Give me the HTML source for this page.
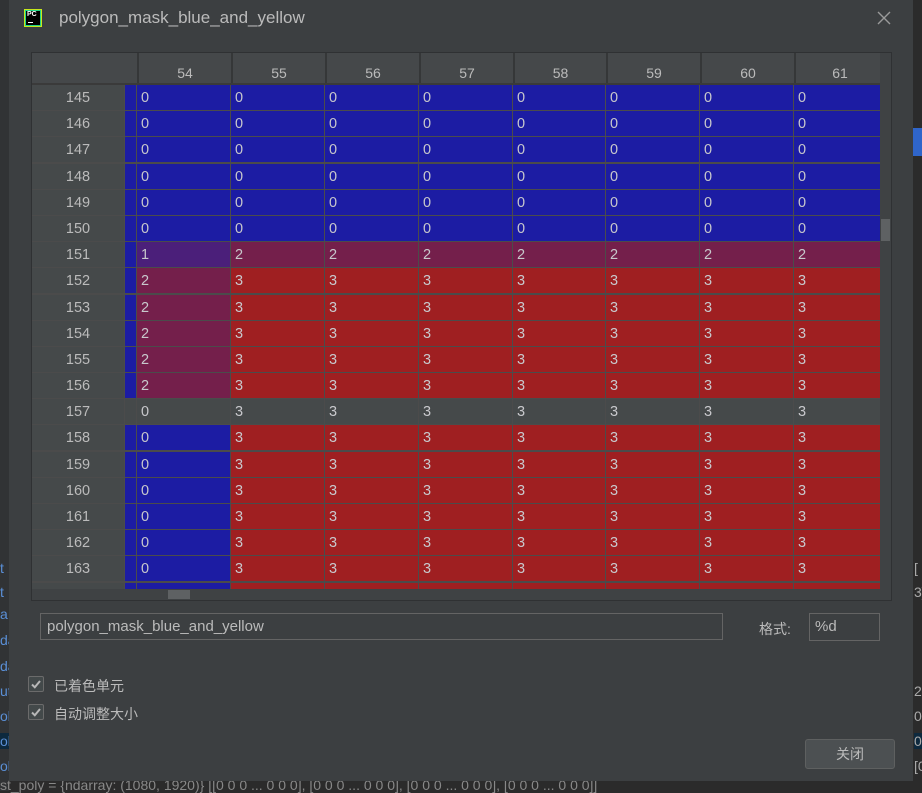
<!DOCTYPE html>
<html><head><meta charset="utf-8"><style>
body{margin:0;width:922px;height:791px;background:#2b2b2b;position:relative;overflow:hidden;font-family:"Liberation Sans","Noto Sans CJK SC",sans-serif;}
.dlg{position:absolute;left:9px;top:0;width:904px;height:781px;background:#3c3f41;}
.title{position:absolute;left:50px;top:8px;font-size:17px;color:#bbbbbb;}
.icon{position:absolute;left:15px;top:9px;width:16px;height:16px;background:#000;border:1px solid #c7e81b;box-shadow:0 0 0 1px #21d789 inset;}
.icon span{position:absolute;left:2px;top:1px;font-size:7px;font-weight:bold;color:#fff;}
.icon i{position:absolute;left:3px;bottom:3px;width:5px;height:1px;background:#fff;}
.close{position:absolute;left:867px;top:10px;width:16px;height:16px;}
.tbl{position:absolute;left:31px;top:52px;width:861px;height:549px;background:#3c3f41;border:1px solid #2f3133;box-sizing:border-box;overflow:hidden;}
.hdr{position:absolute;left:0;top:0;width:848px;height:30px;background:#45484a;border-bottom:2px solid #3a3a3a;}
.hdr div{position:absolute;top:0;height:30px;line-height:40px;text-align:center;font-size:14px;color:#bbbbbb;border-left:2px solid #353738;box-sizing:border-box;}
.grid{position:absolute;left:0;top:32px;display:grid;grid-template-columns:92px 11px 93px 93px 93px 93px 92px 93px 93px 86px;column-gap:1px;row-gap:1.2px;grid-auto-rows:25px;background:#4b4b4b;width:856px;}
.grid div{font-size:14.5px;color:#c8c8cc;line-height:27px;padding-left:4px;box-sizing:border-box;overflow:hidden;white-space:nowrap;}
.grid .i{background:#45494a;text-align:center;padding-left:0;color:#bbbbbb;}
.b{background:#1c1ca3;}.r{background:#9f1f21;}.p{background:#741f4b;}.v{background:#4b1f7a;}.g{background:#45494a;}
.vs{position:absolute;left:848px;top:0;width:12px;height:549px;background:#3f4244;}
.vs i{position:absolute;left:1px;top:166px;width:9px;height:22px;background:#5e6163;}
.hs{position:absolute;left:0;top:536px;width:848px;height:12px;background:#3f4244;}
.hs i{position:absolute;left:136px;top:1px;width:22px;height:9px;background:#5e6163;}
.inp{position:absolute;left:40px;top:613px;width:683px;height:27px;border:1px solid #646464;box-sizing:border-box;font-size:15px;color:#bbbbbb;line-height:26px;padding-left:6px;}
.lbl{position:absolute;left:759px;top:619px;font-size:14px;color:#bbbbbb;}
.fmt{position:absolute;left:809px;top:613px;width:71px;height:28px;border:1px solid #646464;box-sizing:border-box;font-size:15px;color:#bbbbbb;line-height:26px;padding-left:5px;}
.cb{position:absolute;left:28px;width:16px;height:16px;border:1px solid #6b6b6b;border-radius:2px;background:#43494a;box-sizing:border-box;}
.cbl{position:absolute;left:54px;font-size:14px;color:#bbbbbb;}
.btn{position:absolute;left:805px;top:739px;width:90px;height:30px;background:#4c5052;border:1px solid #5e6060;border-radius:3px;box-sizing:border-box;text-align:center;line-height:28px;font-size:14px;color:#bbbbbb;}
.bg{position:absolute;color:#5a8fd6;font-size:14px;}
</style></head><body>
<div style="position:absolute;left:0;top:0;width:9px;height:791px;background:#313335"></div>
<div style="position:absolute;left:913px;top:128px;width:9px;height:28px;background:#2f65ca"></div>
<div class="bg" style="left:0;top:560px">t</div><div class="bg" style="left:0;top:584px">t</div>
<div class="bg" style="left:0;top:606px">a</div><div class="bg" style="left:0;top:632px">da</div>
<div class="bg" style="left:0;top:658px">da</div><div class="bg" style="left:0;top:683px">ut</div>
<div class="bg" style="left:0;top:708px">ol</div><div class="bg" style="left:0;top:733px;background:#0d293e">ol</div>
<div class="bg" style="left:0;top:758px">ol</div>
<div class="bg" style="left:0;top:777px;color:#888">st_poly = {ndarray: (1080, 1920)} [[0 0 0 ... 0 0 0], [0 0 0 ... 0 0 0], [0 0 0 ... 0 0 0], [0 0 0 ... 0 0 0]]</div>
<div class="bg" style="left:914px;top:560px;color:#aaa">[</div><div class="bg" style="left:914px;top:584px;color:#aaa">3]</div>
<div class="bg" style="left:914px;top:683px;color:#aaa">2</div><div class="bg" style="left:914px;top:708px;color:#aaa">0</div>
<div class="bg" style="left:914px;top:733px;color:#aaa;background:#0d293e">0</div><div class="bg" style="left:914px;top:758px;color:#aaa">[0</div>
<div class="dlg">
<div class="icon"><span>PC</span><i></i></div>
<div class="title">polygon_mask_blue_and_yellow</div>
<svg class="close" viewBox="0 0 16 16"><path d="M2 2L14 14M14 2L2 14" stroke="#9a9a9a" stroke-width="1.4"/></svg>
</div>
<div class="tbl">
<div class="hdr">
<div style="left:105px;width:94px">54</div><div style="left:199px;width:94px">55</div><div style="left:293px;width:94px">56</div><div style="left:387px;width:94px">57</div><div style="left:481px;width:93px">58</div><div style="left:574px;width:94px">59</div><div style="left:668px;width:94px">60</div><div style="left:762px;width:90px">61</div>
</div>
<div class="grid">
<div class="i">145</div><div class="b"></div><div class="b">0</div><div class="b">0</div><div class="b">0</div><div class="b">0</div><div class="b">0</div><div class="b">0</div><div class="b">0</div><div class="b">0</div>
<div class="i">146</div><div class="b"></div><div class="b">0</div><div class="b">0</div><div class="b">0</div><div class="b">0</div><div class="b">0</div><div class="b">0</div><div class="b">0</div><div class="b">0</div>
<div class="i">147</div><div class="b"></div><div class="b">0</div><div class="b">0</div><div class="b">0</div><div class="b">0</div><div class="b">0</div><div class="b">0</div><div class="b">0</div><div class="b">0</div>
<div class="i">148</div><div class="b"></div><div class="b">0</div><div class="b">0</div><div class="b">0</div><div class="b">0</div><div class="b">0</div><div class="b">0</div><div class="b">0</div><div class="b">0</div>
<div class="i">149</div><div class="b"></div><div class="b">0</div><div class="b">0</div><div class="b">0</div><div class="b">0</div><div class="b">0</div><div class="b">0</div><div class="b">0</div><div class="b">0</div>
<div class="i">150</div><div class="b"></div><div class="b">0</div><div class="b">0</div><div class="b">0</div><div class="b">0</div><div class="b">0</div><div class="b">0</div><div class="b">0</div><div class="b">0</div>
<div class="i">151</div><div class="b"></div><div class="v">1</div><div class="p">2</div><div class="p">2</div><div class="p">2</div><div class="p">2</div><div class="p">2</div><div class="p">2</div><div class="p">2</div>
<div class="i">152</div><div class="b"></div><div class="p">2</div><div class="r">3</div><div class="r">3</div><div class="r">3</div><div class="r">3</div><div class="r">3</div><div class="r">3</div><div class="r">3</div>
<div class="i">153</div><div class="b"></div><div class="p">2</div><div class="r">3</div><div class="r">3</div><div class="r">3</div><div class="r">3</div><div class="r">3</div><div class="r">3</div><div class="r">3</div>
<div class="i">154</div><div class="b"></div><div class="p">2</div><div class="r">3</div><div class="r">3</div><div class="r">3</div><div class="r">3</div><div class="r">3</div><div class="r">3</div><div class="r">3</div>
<div class="i">155</div><div class="b"></div><div class="p">2</div><div class="r">3</div><div class="r">3</div><div class="r">3</div><div class="r">3</div><div class="r">3</div><div class="r">3</div><div class="r">3</div>
<div class="i">156</div><div class="b"></div><div class="p">2</div><div class="r">3</div><div class="r">3</div><div class="r">3</div><div class="r">3</div><div class="r">3</div><div class="r">3</div><div class="r">3</div>
<div class="i">157</div><div class="g"></div><div class="g">0</div><div class="g">3</div><div class="g">3</div><div class="g">3</div><div class="g">3</div><div class="g">3</div><div class="g">3</div><div class="g">3</div>
<div class="i">158</div><div class="b"></div><div class="b">0</div><div class="r">3</div><div class="r">3</div><div class="r">3</div><div class="r">3</div><div class="r">3</div><div class="r">3</div><div class="r">3</div>
<div class="i">159</div><div class="b"></div><div class="b">0</div><div class="r">3</div><div class="r">3</div><div class="r">3</div><div class="r">3</div><div class="r">3</div><div class="r">3</div><div class="r">3</div>
<div class="i">160</div><div class="b"></div><div class="b">0</div><div class="r">3</div><div class="r">3</div><div class="r">3</div><div class="r">3</div><div class="r">3</div><div class="r">3</div><div class="r">3</div>
<div class="i">161</div><div class="b"></div><div class="b">0</div><div class="r">3</div><div class="r">3</div><div class="r">3</div><div class="r">3</div><div class="r">3</div><div class="r">3</div><div class="r">3</div>
<div class="i">162</div><div class="b"></div><div class="b">0</div><div class="r">3</div><div class="r">3</div><div class="r">3</div><div class="r">3</div><div class="r">3</div><div class="r">3</div><div class="r">3</div>
<div class="i">163</div><div class="b"></div><div class="b">0</div><div class="r">3</div><div class="r">3</div><div class="r">3</div><div class="r">3</div><div class="r">3</div><div class="r">3</div><div class="r">3</div>
<div class="i"></div><div class="b"></div><div class="b"></div><div class="r"></div><div class="r"></div><div class="r"></div><div class="r"></div><div class="r"></div><div class="r"></div><div class="r"></div>
</div>
<div class="vs"><i></i></div>
<div class="hs"><i></i></div>
</div>
<div class="inp">polygon_mask_blue_and_yellow</div>
<div class="lbl">格式:</div>
<div class="fmt">%d</div>
<div class="cb" style="top:676px"><svg width="14" height="14" viewBox="0 0 14 14"><path d="M3 7.5L5.8 10.3L11 4" stroke="#b8b8b8" stroke-width="2" fill="none"/></svg></div>
<div class="cbl" style="top:676px">已着色单元</div>
<div class="cb" style="top:704px"><svg width="14" height="14" viewBox="0 0 14 14"><path d="M3 7.5L5.8 10.3L11 4" stroke="#b8b8b8" stroke-width="2" fill="none"/></svg></div>
<div class="cbl" style="top:704px">自动调整大小</div>
<div class="btn">关闭</div>
</body></html>
